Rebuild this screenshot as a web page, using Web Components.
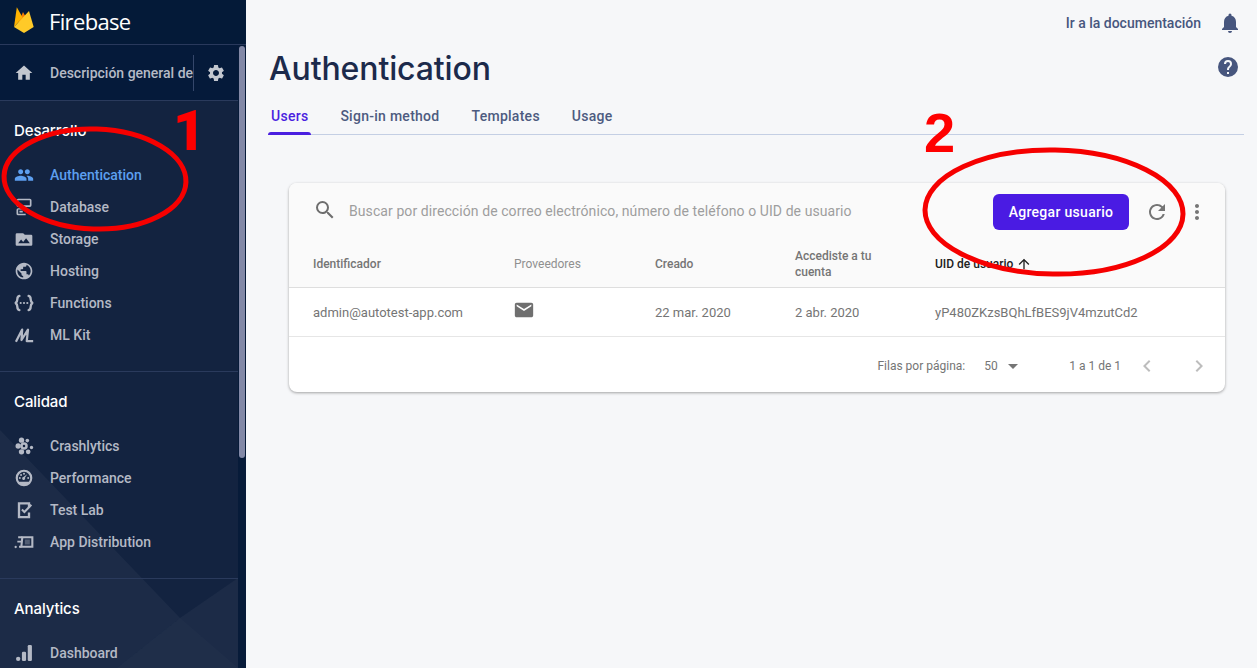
<!DOCTYPE html>
<html lang="es"><head><meta charset="utf-8"><title>Firebase</title>
<style>html,body{margin:0;height:668px;overflow:hidden;background:#f6f7f9;font-family:Roboto,sans-serif}</style></head>
<body>
<fb-app>
  <fb-sidebar slot="side">
    <fb-section title="Desarrollo">
      <fb-item icon="people" active>Authentication</fb-item>
      <fb-item icon="database">Database</fb-item>
      <fb-item icon="storage">Storage</fb-item>
      <fb-item icon="hosting">Hosting</fb-item>
      <fb-item icon="functions">Functions</fb-item>
      <fb-item icon="ml">ML Kit</fb-item>
    </fb-section>
    <fb-section title="Calidad">
      <fb-item icon="crash">Crashlytics</fb-item>
      <fb-item icon="perf">Performance</fb-item>
      <fb-item icon="test">Test Lab</fb-item>
      <fb-item icon="dist">App Distribution</fb-item>
    </fb-section>
    <fb-section title="Analytics" last>
      <fb-item icon="dash">Dashboard</fb-item>
    </fb-section>
  </fb-sidebar>
  <fb-main slot="main"></fb-main>
</fb-app>
<fb-notes></fb-notes>
<script>
const ICONS={
home:'<path d="M10 20v-6h4v6h5v-8h3L12 3 2 12h3v8z"/>',
gear:'<path d="M19.14 12.94c.04-.3.06-.61.06-.94 0-.32-.02-.64-.07-.94l2.03-1.58a.49.49 0 0 0 .12-.61l-1.92-3.32a.488.488 0 0 0-.59-.22l-2.39.96c-.5-.38-1.03-.7-1.62-.94l-.36-2.54a.484.484 0 0 0-.48-.41h-3.84c-.24 0-.43.17-.47.41l-.36 2.54c-.59.24-1.13.57-1.62.94l-2.39-.96c-.22-.08-.47 0-.59.22L2.74 8.87c-.12.21-.08.47.12.61l2.03 1.58c-.05.3-.09.63-.09.94s.02.64.07.94l-2.03 1.58a.49.49 0 0 0-.12.61l1.92 3.32c.12.22.37.29.59.22l2.39-.96c.5.38 1.03.7 1.62.94l.36 2.54c.05.24.24.41.48.41h3.84c.24 0 .44-.17.47-.41l.36-2.54c.59-.24 1.13-.56 1.62-.94l2.39.96c.22.08.47 0 .59-.22l1.92-3.32c.12-.22.07-.47-.12-.61l-2.01-1.58zM12 15.6c-1.98 0-3.6-1.62-3.6-3.6s1.62-3.6 3.6-3.6 3.6 1.62 3.6 3.6-1.62 3.6-3.6 3.6z"/>',
people:'<path d="M16 11c1.66 0 2.99-1.34 2.99-3S17.66 5 16 5c-1.66 0-3 1.34-3 3s1.34 3 3 3zm-8 0c1.66 0 2.99-1.34 2.99-3S9.66 5 8 5C6.34 5 5 6.34 5 8s1.34 3 3 3zm0 2c-2.33 0-7 1.17-7 3.5V19h14v-2.5c0-2.33-4.67-3.5-7-3.5zm8 0c-.29 0-.62.02-.97.05 1.16.84 1.97 1.97 1.97 3.45V19h6v-2.5c0-2.33-4.67-3.5-7-3.5z"/>',
database:'<path fill-rule="evenodd" d="M5 2h14a2 2 0 0 1 2 2v6a2 2 0 0 1-2 2H5a2 2 0 0 1-2-2V4a2 2 0 0 1 2-2zm0 2v6h14V4H5zM5 13.500h10V15H5v5h9v2H5a2 2 0 0 1-2-2v-4.500a2 2 0 0 1 2-2zM6.500 16.500h4v2h-4z"/>',
storage:'<path d="M11 5H3.500A1.500 1.500 0 0 0 2 6.500v12A1.500 1.500 0 0 0 3.500 20h17a1.500 1.500 0 0 0 1.500-1.500v-10A1.500 1.500 0 0 0 20.500 7H13l-2-2zM5 17l3.500-4.500 2.500 3 3.500-4.500L19 17H5z" fill-rule="evenodd"/>',
hosting:'<path d="M12 2C6.480 2 2 6.480 2 12s4.480 10 10 10 10-4.480 10-10S17.520 2 12 2zm-1 17.930c-3.950-.49-7-3.850-7-7.930 0-.62.08-1.210.21-1.790L9 15v1c0 1.100.9 2 2 2v1.930zm6.900-2.540c-.26-.81-1-1.390-1.900-1.390h-1v-3c0-.55-.45-1-1-1H8v-2h2c.55 0 1-.45 1-1V7h2c1.100 0 2-.9 2-2v-.41c2.930 1.190 5 4.060 5 7.410 0 2.080-.8 3.970-2.100 5.390z"/>',
functions:'<g fill="none" stroke="currentColor" stroke-width="2.800" stroke-linecap="round" stroke-linejoin="round"><path d="M6.500 3.500C4 4 4 5.500 4 7.500c0 2-.8 3.500-2 4.500 1.200 1 2 2.500 2 4.500s0 3.500 2.500 4"/><path d="M17.500 3.500C20 4 20 5.500 20 7.500c0 2 .8 3.500 2 4.500-1.200 1-2 2.500-2 4.500s0 3.500-2.500 4"/></g><circle cx="8" cy="12" r="1.300"/><circle cx="12" cy="12" r="1.300"/><circle cx="16" cy="12" r="1.300"/>',
ml:'<path fill="none" stroke="currentColor" stroke-width="2.700" stroke-linejoin="round" d="M2.300 20 9.800 5.500 9 18 16.800 5.500 15.300 19.300H23"/>',
crash:'<circle cx="9" cy="5" r="3.200"/><circle cx="5" cy="12" r="3.200"/><circle cx="9" cy="19" r="3.200"/><circle cx="16" cy="5.500" r="2.200"/><circle cx="17" cy="19" r="2.800"/><circle cx="21" cy="13.800" r="2"/><path fill-rule="evenodd" d="M12 7.500a4.500 4.500 0 1 0 0 9 4.500 4.500 0 0 0 0-9zm0 3a1.500 1.500 0 1 1 0 3 1.500 1.500 0 0 1 0-3z"/>',
perf:'<path fill-rule="evenodd" d="M12 2a10 10 0 1 0 0 20 10 10 0 0 0 0-20zm0 2.600a7.400 7.400 0 0 1 7.400 7.400c0 1.700-.6 3.200-1.500 4.400H6.100A7.300 7.300 0 0 1 4.600 12 7.400 7.400 0 0 1 12 4.600z"/><path d="m15.800 7.500-2.600 4.300a1.800 1.800 0 1 1-1.900-1z"/><circle cx="7" cy="12" r="1.200"/><circle cx="8.500" cy="8.500" r="1.200"/><circle cx="12" cy="7" r="1.200"/><circle cx="17" cy="12" r="1.200"/>',
test:'<g fill="none" stroke="currentColor"><path stroke-width="2.800" d="M18 9V4H6v16.500h12V15"/><path stroke-width="2.500" d="M9.500 11.500l3 3L20.800 5.800"/></g>',
dist:'<g fill="none" stroke="currentColor"><path stroke-width="2.500" d="M10 6.300h12v11.400H8.800z"/><path stroke-width="2.300" d="M5 6.300h5M4 11.500h5.500M6 17.700h3"/></g><path d="M13 9h6v6h-6z" fill-opacity=".35"/><circle cx="2" cy="18" r="1.400"/>',
dash:'<rect x="16.500" y="2.500" width="5" height="19" rx="1.500"/><rect x="9.500" y="10.500" width="5" height="11" rx="1.500"/><circle cx="5" cy="19" r="2.600"/>'
};
const svg=(n,s=24)=>`<svg width="${s}" height="${s}" viewBox="0 0 24 24" fill="currentColor">${ICONS[n]}</svg>`;

class El extends HTMLElement{
  render(html){this.attachShadow({mode:'open'}).innerHTML=html;}
}
customElements.define('fb-app',class extends El{connectedCallback(){this.render(`<style>
:host{display:flex;height:668px;width:1257px;overflow:hidden}
::slotted([slot=side]){flex:0 0 246px}
::slotted([slot=main]){flex:1 1 0;min-width:0}
</style><slot name="side"></slot><slot name="main"></slot>`)}});

customElements.define('fb-sidebar',class extends El{connectedCallback(){this.render(`<style>
:host{display:block;height:668px;position:relative;overflow:hidden;background:#051e3c;color:#fff}
.head{height:44px;display:flex;align-items:center;background:#041a38;border-bottom:1px solid #29395c}
.head svg{margin:-4px 0 0 14px}
.head span{margin:-2px 0 0 15px;font:400 22px/1 "Open Sans",Lato,sans-serif;letter-spacing:-.65px;color:#fff}
.wrap{display:flex;height:623px}
.col{width:238px;flex:none;background:#132340;position:relative}
.deco{position:absolute;left:0;top:-45px}
.content{position:relative}
.bar{flex:1;background:#071b39;position:relative}
.thumb{position:absolute;left:1px;top:1px;width:6px;height:412px;background:#8288a6;border-radius:3px}
.ov{height:55px;display:flex;align-items:center;border-bottom:1px solid #2a3a5c;background:#051a3a;color:#b5bac6}
.ov .ico{width:20px;height:20px;margin-left:14px;color:#c3c7cf;display:flex}
.ov .t{margin-left:16px;width:143px;overflow:hidden;white-space:nowrap;font:500 14px/36px Roboto,sans-serif;border-right:1px solid #35476b;height:36px}
.ov .g{margin-left:12px;color:#c3c7cf;display:flex}
</style>
<div class="head"><svg width="20" height="26" viewBox="0 0 20 26"><path fill="#f57c00" d="M4 17 9 5l4.500 8-5 8z"/><path fill="#ffb300" d="M0 20 2.800 0.300 8.600 10.500z"/><path fill="#ffca28" d="M0 20 15 4 19.700 20 10 26z"/></svg><span>Firebase</span></div>
<div class="wrap">
 <div class="col">
  <svg class="deco" width="238" height="668"><polygon points="0,430 180,618 117,668 0,668" fill="#fff" fill-opacity=".04"/><polygon points="238,578 180,618 117,668 238,668" fill="#fff" fill-opacity=".04"/><polygon points="180,618 238,668 117,668" fill="#fff" fill-opacity=".015"/></svg>
  <div class="content">
  <div class="ov"><span class="ico">${svg('home',20)}</span><span class="t">Descripción general del proyecto</span><span class="g">${svg('gear',20)}</span></div>
  <slot></slot>
  </div>
 </div>
 <div class="bar"><div class="thumb"></div></div>
</div>`)}});

customElements.define('fb-section',class extends El{connectedCallback(){const last=this.hasAttribute('last');this.render(`<style>
:host{display:block;border-bottom:${last?'0':'1px solid #2a3a5c'};padding-bottom:20px;color:#fff}
h3{margin:0;padding:20px 0 0 14px;font:500 15px/20px Inter,Roboto,sans-serif;letter-spacing:-.1px;height:20px}
.l{padding-top:18px;display:block}
</style><h3>${this.getAttribute('title')}</h3><div class="l"><slot></slot></div>`);
 this.removeAttribute('title');}});

customElements.define('fb-item',class extends El{connectedCallback(){const a=this.hasAttribute('active');this.render(`<style>
:host{display:flex;align-items:center;height:32px;position:relative;color:${a?'#5d9fef':'#b4b9c5'};font:500 14px/32px Roboto,sans-serif}
.i{width:20px;height:20px;margin-left:14px;margin-right:16px;display:flex}
</style><span class="i">${svg(this.getAttribute('icon'),20)}</span><slot></slot>`)}});

customElements.define('fb-main',class extends El{connectedCallback(){this.render(`<style>
:host{display:block;height:668px;background:#f6f7f9;box-sizing:border-box;padding:0 32px 0 24px;position:relative;width:1011px}
.top{height:46px;display:flex;align-items:center;justify-content:flex-end;color:#47567e;font:500 14px Roboto,sans-serif;margin-right:-17px}
.top svg{margin-left:17px}
.title{display:flex;justify-content:space-between;align-items:flex-start;height:51px}
h1{margin:1px 0 0 -1px;font:500 32px/44px Inter,sans-serif;color:#1c2a4b;letter-spacing:-.13px}
.help{color:#47567e;margin:9px -15px 0 0;display:flex}
.tabs{display:flex;border-bottom:1px solid #c4cfe4;height:38px;box-sizing:border-box;margin:0 -19px 0 -2px;font:500 14px/38px Roboto,sans-serif;color:#4d5b80;letter-spacing:.27px}
.tab{margin-right:26px;height:38px;box-sizing:border-box;padding:0 3px;position:relative;white-space:nowrap}
.tab.on{color:#4a1fe0}
.tab.on::after{content:"";position:absolute;left:0;right:0;bottom:0;height:3px;background:#4a1fe0;border-radius:3px 3px 0 0}
users-card{margin:48px 0 0 19px}
</style>
<div class="top"><span>Ir a la documentación</span><svg width="24" height="24" viewBox="0 0 24 24" fill="currentColor"><path d="M12 22c1.100 0 2-.9 2-2h-4a2 2 0 0 0 2 2zm6-6v-5c0-3.100-1.600-5.600-4.500-6.300V4a1.500 1.500 0 0 0-3 0v.7C7.600 5.400 6 7.900 6 11v5l-2 2v1h16v-1z"/></svg></div>
<div class="title"><h1>Authentication</h1><span class="help"><svg width="24" height="24" viewBox="0 0 24 24" fill="currentColor"><path d="M12 2a10 10 0 1 0 0 20 10 10 0 0 0 0-20zm1 17h-2v-2h2zm2.100-7.700-.9.900c-.7.700-1.200 1.300-1.200 2.800h-2v-.5c0-1.100.5-2.100 1.200-2.800l1.200-1.300c.4-.3.600-.8.600-1.400a2 2 0 0 0-4 0H8a4 4 0 0 1 8 0c0 .9-.4 1.700-.9 2.300z"/></svg></span></div>
<div class="tabs"><span class="tab on">Users</span><span class="tab">Sign-in method</span><span class="tab">Templates</span><span class="tab">Usage</span></div>
<users-card></users-card>`)}});

customElements.define('users-card',class extends El{connectedCallback(){
const i=(p,s=24,c='currentColor')=>`<svg width="${s}" height="${s}" viewBox="0 0 24 24" fill="${c}"><path d="${p}"/></svg>`;
this.render(`<style>
:host{display:block;width:936px;height:209px;border-radius:8px;background:#fff;box-shadow:0 1px 3px rgba(0,0,0,.35);overflow:hidden;font:400 13px Roboto,sans-serif;color:#757575}
.hd{background:#fafafa;border-bottom:1px solid #dedede;height:104px}
.tb{display:flex;align-items:center;height:57px}
.tb .s{margin:-3px 0 0 24px;display:flex;color:#6e6e6e}
.tb .q{margin:-2px 0 0 12px;font-size:14px;letter-spacing:.08px;color:#9e9e9e;white-space:nowrap;flex:1}
.btn{background:#4a1be3;color:#fff;font:500 14px/36px Roboto,sans-serif;letter-spacing:.3px;height:36px;width:136px;text-align:center;border-radius:6px;margin-right:16px}
.rf{color:#757575;display:flex;margin-right:16px}
.mv{color:#757575;display:flex;margin-right:16px}
.row{display:grid;grid-template-columns:201px 141px 140px 140px 1fr;padding-left:24px;align-items:center}
.th{height:47px;font:500 12px/16px Roboto,sans-serif;color:#757575}
.th span:nth-child(2){font-weight:400;color:#8f8f8f}
.uid{color:#212121;display:flex;align-items:center}
.uid svg{margin-left:3px}
.td{height:48px;border-bottom:1px solid #e6e6e6;font-size:13px}
.mail{display:flex;margin:-5px 0 0 -1px;color:#6f6f6f}
.ft{height:54px;padding:2px 14px 0 0;display:flex;align-items:center;justify-content:flex-end;font-size:12px;color:#757575}
.ft .v{margin-left:19px;font-size:12px;width:15px}
.ft .d{display:flex;margin:0 0 0 2px;color:#757575}
.ft .r{margin-left:44px}.ft .c{display:flex;color:#bdbdbd}
</style>
<div class="hd">
<div class="tb"><span class="s">${i('M15.500 14h-.79l-.28-.27A6.470 6.470 0 0 0 16 9.500 6.500 6.500 0 1 0 9.500 16c1.610 0 3.090-.59 4.230-1.570l.27.28v.79l5 4.990L20.490 19l-4.990-5zm-6 0C7.010 14 5 11.990 5 9.500S7.010 5 9.500 5 14 7.010 14 9.500 11.990 14 9.500 14z')}</span>
<span class="q">Buscar por dirección de correo electrónico, número de teléfono o UID de usuario</span>
<span class="btn">Agregar usuario</span>
<span class="rf">${i('M17.650 6.350A7.958 7.958 0 0 0 12 4c-4.420 0-7.990 3.580-7.990 8s3.570 8 7.990 8c3.730 0 6.840-2.550 7.730-6h-2.080A5.990 5.990 0 0 1 12 18c-3.310 0-6-2.690-6-6s2.690-6 6-6c1.660 0 3.140.69 4.220 1.780L13 11h7V4l-2.350 2.350z')}</span>
<span class="mv">${i('M12 8c1.100 0 2-.9 2-2s-.9-2-2-2-2 .9-2 2 .9 2 2 2zm0 2c-1.100 0-2 .9-2 2s.9 2 2 2 2-.9 2-2-.9-2-2-2zm0 6c-1.100 0-2 .9-2 2s.9 2 2 2 2-.9 2-2-.9-2-2-2z')}</span></div>
<div class="row th"><span>Identificador</span><span>Proveedores</span><span>Creado</span><span>Accediste a tu<br>cuenta</span><span class="uid">UID de usuario${i('M4 12l1.410 1.410L11 7.830V20h2V7.830l5.580 5.590L20 12l-8-8-8 8z',16)}</span></div>
</div>
<div class="row td"><span>admin@autotest-app.com</span><span class="mail">${i('M20 4H4c-1.100 0-1.990.9-1.990 2L2 18c0 1.100.9 2 2 2h16c1.100 0 2-.9 2-2V6c0-1.100-.9-2-2-2zm0 4-8 5-8-5V6l8 5 8-5v2z',22)}</span><span>22 mar. 2020</span><span>2 abr. 2020</span><span>yP480ZKzsBQhLfBES9jV4mzutCd2</span></div>
<div class="ft"><span>Filas por página:</span><span class="v">50</span><span class="d">${i('M7 10l5 5 5-5z')}</span><span class="r">1 a 1 de 1</span><span class="c" style="margin-left:14px">${i('M15.410 7.410 14 6l-6 6 6 6 1.410-1.410L10.830 12z')}</span><span class="c" style="margin-left:28px">${i('M10 6 8.590 7.410 13.170 12l-4.580 4.590L10 18l6-6z')}</span></div>`)}});

customElements.define('fb-notes',class extends El{connectedCallback(){this.render(`<style>
:host{position:absolute;left:0;top:0;width:1257px;height:668px;pointer-events:none;display:block}
svg{position:absolute;left:0;top:0}
b{position:absolute;font:900 56px/56px Roboto,"Liberation Sans",sans-serif;color:#f00}
</style>
<svg width="1257" height="668" fill="none" stroke="#f60000" stroke-width="5"><ellipse cx="95" cy="179" rx="91" ry="50" transform="rotate(2 95 179)"/><ellipse cx="1054" cy="212" rx="129" ry="62" transform="rotate(1 1054 212)"/></svg>
<b style="left:173px;top:103px">1</b><b style="left:924px;top:105px;font-family:'Liberation Sans',sans-serif;font-weight:700">2</b>`)}});
</script>
</body></html>
